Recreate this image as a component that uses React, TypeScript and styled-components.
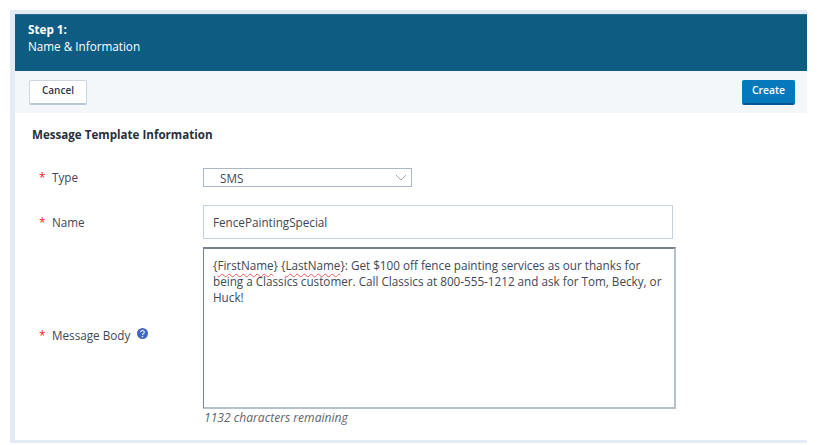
import React from 'react';
import styled, { createGlobalStyle } from 'styled-components';

const GlobalStyle = createGlobalStyle`
  html, body {
    margin: 0;
    padding: 0;
    background: #ffffff;
    font-family: "Open Sans", "Liberation Sans", sans-serif;
  }
`;

const Page = styled.div`
  width: 820px;
  height: 445px;
  overflow: hidden;
  box-sizing: border-box;
  padding: 10px 13px 2px 10px;
`;

const Frame = styled.div`
  height: 433px;
  box-sizing: border-box;
  background: #e3ebf4;
  padding: 4px 0 3px 5px;
  display: flex;
  flex-direction: column;
`;

const Header = styled.div`
  height: 57px;
  flex: none;
  box-sizing: border-box;
  background: #0e5c82;
  border-top: 1px solid #2a6f91;
  color: #ffffff;
  padding: 6px 13px;
  font-size: 11.7px;
  line-height: 17px;
`;

const StepTitle = styled.div`
  font-weight: 700;
`;

const Toolbar = styled.div`
  height: 42px;
  flex: none;
  box-sizing: border-box;
  background: #f3f7fa;
  padding: 9px 12px 0 14px;
  display: flex;
  justify-content: space-between;
  align-items: flex-start;
`;

const ActionButton = styled.button<{ $primary?: boolean }>`
  height: 25px;
  box-sizing: border-box;
  width: ${(p) => (p.$primary ? '53px' : '58px')};
  padding: 0 0 5px;
  font-family: inherit;
  font-size: ${(p) => (p.$primary ? '10.4px' : '10px')};
  font-weight: 600;
  border-radius: 2px;
  border: 1px solid ${(p) => (p.$primary ? '#0679bd' : '#ccd6e0')};
  border-bottom: 2px solid ${(p) => (p.$primary ? '#04589a' : '#b9c7d6')};
  background: ${(p) => (p.$primary ? '#0679bd' : '#ffffff')};
  color: ${(p) => (p.$primary ? '#ffffff' : '#2b3a4a')};
`;

const Content = styled.div`
  flex: 1;
  background: #ffffff;
  padding: 15px 0 0 17px;
`;

const SectionTitle = styled.div`
  font-size: 11.6px;
  line-height: 14px;
  font-weight: 700;
  color: #26303c;
  margin-bottom: 26px;
`;

const FormGrid = styled.div`
  display: grid;
  grid-template-columns: 171px auto;
  justify-content: start;
  align-items: center;
  row-gap: 18px;
`;

const Label = styled.div<{ $pullUp?: boolean }>`
  display: flex;
  align-items: center;
  padding-left: 7px;
  margin-top: ${(p) => (p.$pullUp ? '-14px' : '-1px')};
  font-size: 11.7px;
  line-height: 16px;
  color: #3d4854;
`;

const Star = styled.span`
  color: #f0212b;
  width: 13px;
  flex: none;
`;

const HelpIcon = styled.svg`
  width: 11px;
  height: 11px;
  margin: -3px 0 0 7px;
`;

const SelectBox = styled.div`
  width: 209px;
  height: 19px;
  box-sizing: border-box;
  border: 1px solid #a9b7c6;
  padding: 0 4px 0 16px;
  display: flex;
  justify-content: space-between;
  align-items: center;
  font-size: 11.7px;
  color: #3d4854;
`;

const Chevron = styled.svg`
  width: 12px;
  height: 7px;
`;

const NameInput = styled.div`
  width: 470px;
  height: 34px;
  box-sizing: border-box;
  border: 1px solid #c5d1dc;
  padding: 0 9px;
  display: flex;
  align-items: center;
  font-size: 11.7px;
  color: #3d4854;
`;

const BodyField = styled.div`
  display: flex;
  flex-direction: column;
  margin-top: -10px;
`;

const TextArea = styled.div`
  width: 473px;
  height: 162px;
  box-sizing: border-box;
  border-style: solid;
  border-width: 2px 2px 2px 1px;
  border-color: #77848f #b4c0ca #b4c0ca #77848f;
  padding: 8px 9px;
  font-size: 11.7px;
  line-height: 16px;
  color: #3d4854;
`;

const Misspelled = styled.span`
  text-decoration: underline wavy #ee5a5a 1px;
  text-underline-offset: 3px;
`;

const Remaining = styled.div`
  font-size: 12.1px;
  line-height: 16px;
  font-style: italic;
  color: #5c6670;
  margin: 1px 0 0 1px;
`;

export default function App() {
  return (
    <Page>
      <GlobalStyle />
      <Frame>
        <Header>
          <StepTitle>Step 1:</StepTitle>
          <div>Name &amp; Information</div>
        </Header>
        <Toolbar>
          <ActionButton>Cancel</ActionButton>
          <ActionButton $primary>Create</ActionButton>
        </Toolbar>
        <Content>
          <SectionTitle>Message Template Information</SectionTitle>
          <FormGrid>
            <Label><Star>*</Star>Type</Label>
            <SelectBox>
              SMS
              <Chevron viewBox="0 0 12 7">
                <path d="M1 1l5 5 5-5" fill="none" stroke="#a3aeb9" strokeWidth="1" />
              </Chevron>
            </SelectBox>

            <Label><Star>*</Star>Name</Label>
            <NameInput>FencePaintingSpecial</NameInput>

            <Label $pullUp>
              <Star>*</Star>Message Body
              <HelpIcon viewBox="0 0 11 11">
                <circle cx="5.5" cy="5.5" r="5.5" fill="#4066c4" />
                <path d="M3.7 4.2a1.8 1.7 0 1 1 2.8 1.4c-.7.4-1 .7-1 1.4" fill="none" stroke="#dfe8f8" strokeWidth="1.2" />
                <circle cx="5.5" cy="8.6" r=".8" fill="#dfe8f8" />
              </HelpIcon>
            </Label>
            <BodyField>
              <TextArea>
                {'{'}<Misspelled>FirstName</Misspelled>{'}'} {'{'}<Misspelled>LastName</Misspelled>{'}'}: Get $100 off fence painting services as our thanks for being a Classics customer. Call Classics at 800-555-1212 and ask for Tom, Becky, or Huck!
              </TextArea>
              <Remaining>1132 characters remaining</Remaining>
            </BodyField>
          </FormGrid>
        </Content>
      </Frame>
    </Page>
  );
}
